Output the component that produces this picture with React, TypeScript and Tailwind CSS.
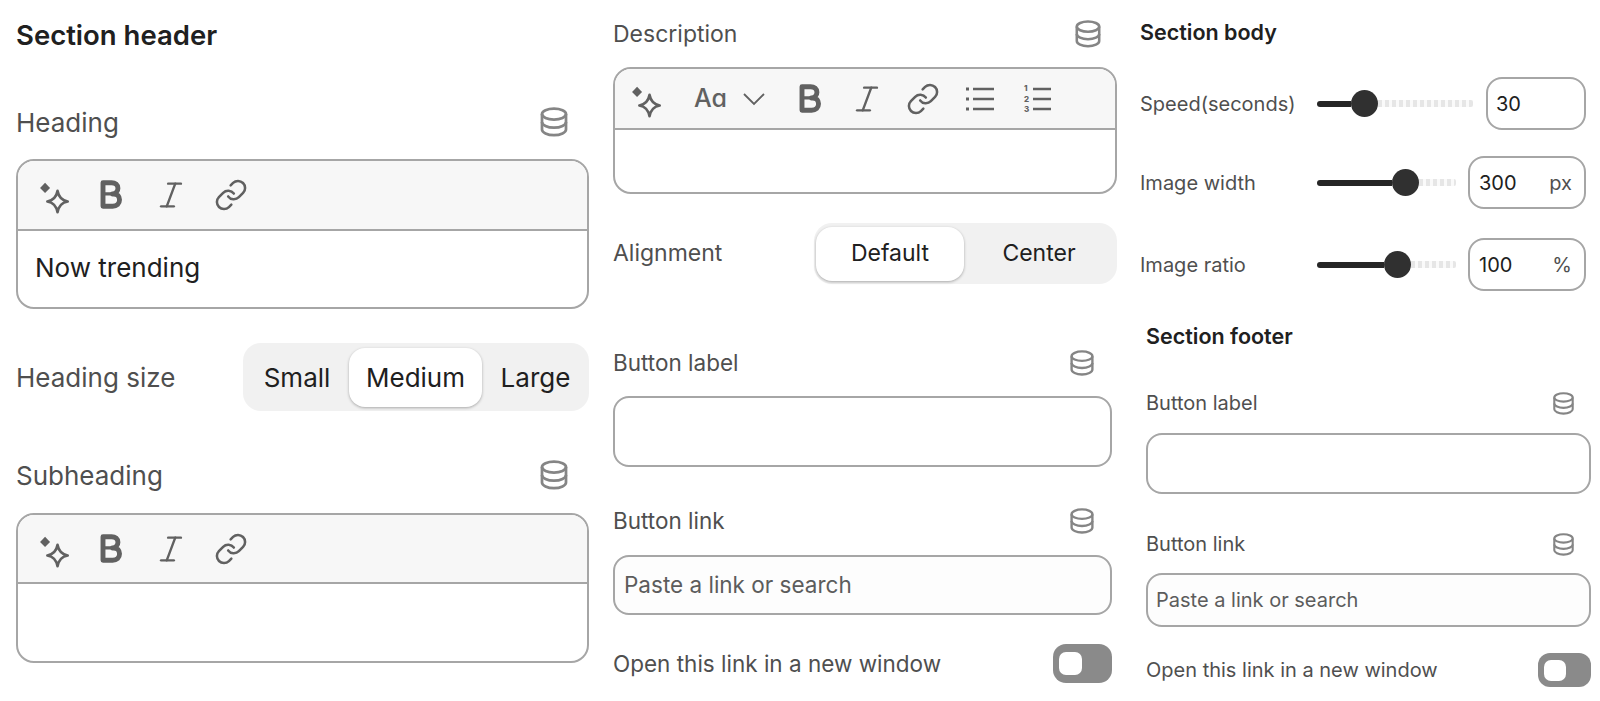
import { Italic, Link } from "lucide-react";

const FONT = "[font-family:Inter,'Noto_Sans',sans-serif]";

function DbIcon({ className }: { className: string }) {
  return (
    <svg viewBox="0 0 20 22" fill="none" stroke="#858585" strokeWidth="2" className={className}>
      <ellipse cx="10" cy="5.2" rx="8.8" ry="4" />
      <path d="M1.2 5.2v11.300c0 2.200 3.900 4.200 8.800 4.200s8.800-2 8.800-4.200V5.200" />
      <path d="M1.2 11c0 2.200 3.900 4.200 8.800 4.200s8.800-2 8.800-4.200" />
    </svg>
  );
}

function SparkleIcon() {
  return (
    <svg viewBox="0 0 30 30" className="w-[34px] h-[34px] mt-[4px]" fill="none">
      <path d="M8 2.500 12.400 7 8 11.400 3.600 7z" fill="#616161" />
      <path d="M19 9.500c.9 5 4 8.600 9 9.500-5 .9-8.100 4.500-9 9.500-.9-5-4-8.600-9-9.500 5-.9 8.100-4.500 9-9.500z" stroke="#616161" strokeWidth="2.300" strokeLinejoin="round" />
    </svg>
  );
}

function BoldIcon() {
  return (
    <svg viewBox="0 0 24 30" className="w-[26px] h-[32px]" fill="none">
      <path d="M4.500 3.500h8c3.600 0 6 2 6 5.200 0 2.800-2 5-5 5.300h1c3.400 0 5.500 2.300 5.500 5.500 0 3.500-2.500 6-6.500 6h-9z" stroke="#616161" strokeWidth="4.600" strokeLinejoin="round" />
      <path d="M5 14h8" stroke="#616161" strokeWidth="3" />
    </svg>
  );
}

function ChevronIcon() {
  return (
    <svg viewBox="0 0 26 16" className="w-[26px] h-[16px]" fill="none" stroke="#616161" strokeWidth="1.800">
      <path d="M3 3l10 10 10-10" />
    </svg>
  );
}

function BulletListIcon() {
  return (
    <svg viewBox="0 0 30 26" className="w-[30px] h-[26px]" fill="none" stroke="#616161" strokeWidth="2.400">
      <path d="M8 3h21M8 13h21M8 23h21" />
      <path d="M1 3h3M1 13h3M1 23h3" strokeWidth="3" />
    </svg>
  );
}

function NumberListIcon() {
  return (
    <svg viewBox="0 0 30 32" className="w-[30px] h-[32px]" fill="none" stroke="#616161" strokeWidth="2.400">
      <path d="M11 6h18M11 16h18M11 26h18" />
      <g fill="#616161" stroke="none" fontSize="8" fontWeight="800" fontFamily="Inter, sans-serif">
        <text x="2" y="8">1</text>
        <text x="2" y="18.500">2</text>
        <text x="2" y="29">3</text>
      </g>
    </svg>
  );
}

function LinkIcon() {
  return <Link className="w-[34px] h-[34px] text-[#616161]" strokeWidth={1.800} />;
}

function ItalicIcon() {
  return <Italic className="w-[34px] h-[34px] text-[#616161]" strokeWidth={1.700} />;
}

function EditorBox({ boxClass, barClass, children, value }: { boxClass: string; barClass: string; children: React.ReactNode; value?: string }) {
  return (
    <div className={`border-2 border-[#a6a6a6] rounded-[18px] overflow-hidden bg-white ${boxClass}`}>
      <div className={`flex items-center bg-[#f7f7f7] border-b-2 border-[#a6a6a6] ${barClass}`}>{children}</div>
      {value && <div className="pl-[17px] pt-[19px] text-[26px] leading-[36px] text-[#202020]">{value}</div>}
    </div>
  );
}

function Speed({ fill, rest, width }: { fill: string; rest: string; width: string }) {
  return (
    <div className={`flex items-center ${width}`}>
      <div className={`h-[6px] rounded-l-full bg-[#262626] ${fill}`} />
      <div className="w-[27px] h-[27px] rounded-full bg-[#303030] shrink-0" />
      <div className={`h-[7px] rounded-r-[2px] bg-[repeating-linear-gradient(90deg,#e6e6e6_0,#e6e6e6_4px,#fafafa_4px,#fafafa_7px)] ${rest}`} />
    </div>
  );
}

function Toggle({ outer, knob }: { outer: string; knob: string }) {
  return (
    <div className={`flex items-center bg-[#8a8a8a] pl-[6px] ${outer}`}>
      <div className={`bg-white ${knob}`} />
    </div>
  );
}

export default function App() {
  return (
    <div className={`flex h-[701px] w-[1600px] overflow-hidden bg-white pl-[16px] ${FONT}`}>
      {/* left column */}
      <div className="w-[573px] shrink-0">
        <div className="h-[72px] flex items-center text-[27.500px] font-semibold text-[#202020]">Section header</div>
        <div className="mt-[30px] h-[40px] flex items-center justify-between pr-[21px] text-[26px] text-[#4f4f4f]">
          <span>Heading</span>
          <DbIcon className="w-[28px] h-[30px]" />
        </div>
        <EditorBox boxClass="mt-[17px] h-[150px]" barClass="h-[70px] pl-[18px]" value="Now trending">
          <SparkleIcon />
          <div className="ml-[28px]"><BoldIcon /></div>
          <div className="ml-[30px]"><ItalicIcon /></div>
          <div className="ml-[26px]"><LinkIcon /></div>
        </EditorBox>
        <div className="mt-[34px] h-[68px] flex items-center justify-between text-[26px] text-[#4f4f4f]">
          <span>Heading size</span>
          <div className="w-[346px] h-full bg-[#f1f1f1] rounded-[18px] flex items-center pl-[2px] text-[#202020]">
            <span className="w-[104px] text-center">Small</span>
            <span className="w-[133px] h-[59px] flex items-center justify-center bg-white rounded-[16px] shadow-[0_1px_3px_rgba(0,0,0,0.3)]">Medium</span>
            <span className="w-[107px] text-center">Large</span>
          </div>
        </div>
        <div className="mt-[44px] h-[40px] flex items-center justify-between pr-[21px] text-[26px] text-[#4f4f4f]">
          <span>Subheading</span>
          <DbIcon className="w-[28px] h-[30px]" />
        </div>
        <EditorBox boxClass="mt-[18px] h-[150px]" barClass="h-[69px] pl-[18px]">
          <SparkleIcon />
          <div className="ml-[28px]"><BoldIcon /></div>
          <div className="ml-[30px]"><ItalicIcon /></div>
          <div className="ml-[26px]"><LinkIcon /></div>
        </EditorBox>
      </div>

      {/* middle column */}
      <div className="w-[504px] shrink-0 ml-[24px] pt-[14px]">
        <div className="h-[40px] flex items-center justify-between pr-[16px] text-[23px] text-[#4f4f4f]">
          <span>Description</span>
          <DbIcon className="w-[26px] h-[28px]" />
        </div>
        <EditorBox boxClass="mt-[13px] h-[127px]" barClass="h-[61px] pl-[13px]">
          <SparkleIcon />
          <span className="ml-[32px] w-[31px] text-[25px] font-medium leading-none text-[#616161] [font-feature-settings:'cv11']">Aa</span>
          <div className="ml-[16px]"><ChevronIcon /></div>
          <div className="ml-[30px]"><BoldIcon /></div>
          <div className="ml-[27px]"><ItalicIcon /></div>
          <div className="ml-[22px]"><LinkIcon /></div>
          <div className="ml-[25px]"><BulletListIcon /></div>
          <div className="ml-[27px]"><NumberListIcon /></div>
        </EditorBox>
        <div className="mt-[29px] h-[61px] flex items-center justify-between text-[23px] text-[#4f4f4f]">
          <span>Alignment</span>
          <div className="w-[303px] h-full bg-[#f1f1f1] rounded-[18px] flex items-center pl-[2px] text-[#202020]">
            <span className="w-[148px] h-[54px] flex items-center justify-center bg-white rounded-[16px] shadow-[0_1px_3px_rgba(0,0,0,0.3)]">Default</span>
            <span className="w-[150px] text-center">Center</span>
          </div>
        </div>
        <div className="mt-[59px] h-[40px] w-[499px] flex items-center justify-between pr-[18px] text-[22.500px] text-[#4f4f4f]">
          <span>Button label</span>
          <DbIcon className="w-[24px] h-[26px]" />
        </div>
        <div className="mt-[13px] h-[71px] w-[499px] border-2 border-[#a6a6a6] rounded-[16px] bg-white" />
        <div className="mt-[34px] h-[40px] w-[499px] flex items-center justify-between pr-[18px] text-[22.500px] text-[#4f4f4f]">
          <span>Button link</span>
          <DbIcon className="w-[24px] h-[26px]" />
        </div>
        <div className="mt-[14px] h-[60px] w-[499px] border-2 border-[#a6a6a6] rounded-[16px] bg-[#fdfdfd] flex items-center pl-[9px] text-[22.500px] text-[#5c5c5c]">Paste a link or search</div>
        <div className="mt-[29px] h-[39px] w-[499px] flex items-center justify-between text-[22.500px] text-[#4f4f4f]">
          <span>Open this link in a new window</span>
          <Toggle outer="w-[59px] h-[39px] rounded-[13px]" knob="w-[23px] h-[23px] rounded-[7px]" />
        </div>
      </div>

      {/* right column */}
      <div className="w-[451px] shrink-0 ml-[23px] pt-[12px] text-[#4f4f4f]">
        <div className="h-[40px] flex items-center text-[21.500px] font-semibold text-[#202020]">Section body</div>
        <div className="w-[446px] mt-[25px] h-[53px] flex items-center text-[20px]">
          <span className="w-[177px]">Speed(seconds)</span>
          <Speed width="w-[156px]" fill="w-[34px]" rest="w-[95px]" />
          <div className="ml-auto w-[100px] h-full border-2 border-[#a6a6a6] rounded-[16px] flex items-center pl-[8px] text-[#202020]">30</div>
        </div>
        <div className="w-[446px] mt-[26px] h-[53px] flex items-center text-[20px]">
          <span className="w-[177px]">Image width</span>
          <Speed width="w-[139px]" fill="w-[75px]" rest="w-[37px]" />
          <div className="ml-auto w-[118px] h-full border-2 border-[#a6a6a6] rounded-[16px] flex items-center justify-between pl-[9px] pr-[12px] text-[#202020]">300<span className="text-[#4f4f4f]">px</span></div>
        </div>
        <div className="w-[446px] mt-[29px] h-[53px] flex items-center text-[20px]">
          <span className="w-[177px]">Image ratio</span>
          <Speed width="w-[139px]" fill="w-[67px]" rest="w-[45px]" />
          <div className="ml-auto w-[118px] h-full border-2 border-[#a6a6a6] rounded-[16px] flex items-center justify-between pl-[9px] pr-[12px] text-[#202020]">100<span className="text-[#4f4f4f]">%</span></div>
        </div>

        <div className="ml-[6px] w-[445px]">
          <div className="mt-[30px] h-[30px] flex items-center text-[21.500px] font-semibold text-[#202020]">Section footer</div>
          <div className="mt-[37px] h-[30px] flex items-center justify-between pr-[17px] text-[20px]">
            <span>Button label</span>
            <DbIcon className="w-[21px] h-[23px]" />
          </div>
          <div className="mt-[15px] h-[61px] border-2 border-[#a6a6a6] rounded-[16px] bg-white" />
          <div className="mt-[35px] h-[30px] flex items-center justify-between pr-[17px] text-[20px]">
            <span>Button link</span>
            <DbIcon className="w-[21px] h-[23px]" />
          </div>
          <div className="mt-[14px] h-[54px] border-2 border-[#a6a6a6] rounded-[16px] bg-[#fdfdfd] flex items-center pl-[8px] text-[20px] text-[#5c5c5c]">Paste a link or search</div>
          <div className="mt-[26px] h-[34px] flex items-center justify-between text-[20px]">
            <span>Open this link in a new window</span>
            <Toggle outer="w-[53px] h-[34px] rounded-[12px]" knob="w-[22px] h-[21px] rounded-[7px]" />
          </div>
        </div>
      </div>
    </div>
  );
}
